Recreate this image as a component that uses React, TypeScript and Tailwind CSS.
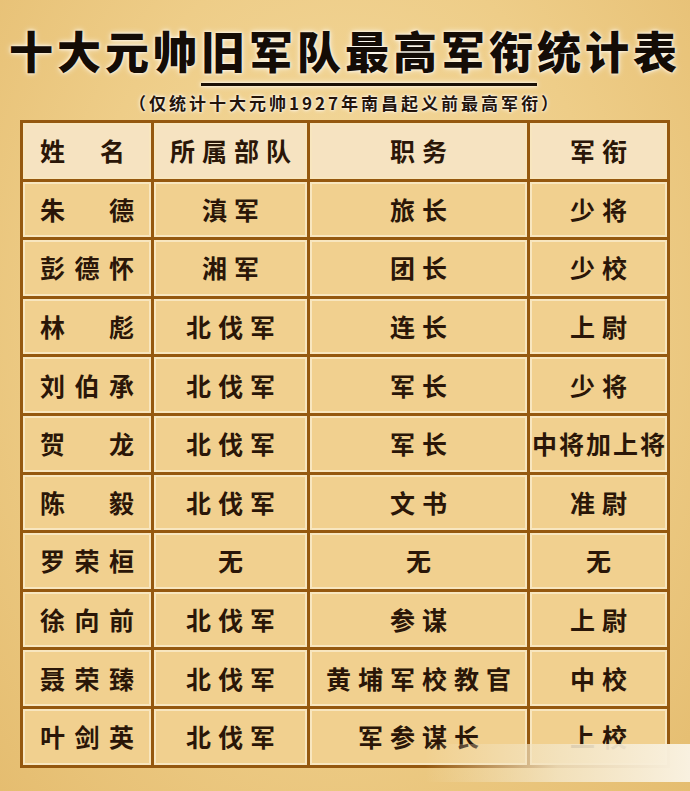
const rows: [string, string, string, string][] = [
  ['朱德', '滇军', '旅长', '少将'],
  ['彭德怀', '湘军', '团长', '少校'],
  ['林彪', '北伐军', '连长', '上尉'],
  ['刘伯承', '北伐军', '军长', '少将'],
  ['贺龙', '北伐军', '军长', '中将加上将'],
  ['陈毅', '北伐军', '文书', '准尉'],
  ['罗荣桓', '无', '无', '无'],
  ['徐向前', '北伐军', '参谋', '上尉'],
  ['聂荣臻', '北伐军', '黄埔军校教官', '中校'],
  ['叶剑英', '北伐军', '军参谋长', '上校'],
];

const cjk = "font-['Noto_Sans_CJK_SC',sans-serif]";

function NameCell({ name, header }: { name: string; header?: boolean }) {
  return (
    <div
      className={`flex items-center justify-between shadow-[inset_0_0_0_2px_#f8e6bf] ${
        header ? 'bg-[#f6e3c1] pl-[17px] pr-[26px]' : 'bg-[#f1d08f] px-[17px]'
      }`}
    >
      {name.split('').map((c, i) => (
        <span key={i}>{c}</span>
      ))}
    </div>
  );
}

function Cell({ text, header, tight }: { text: string; header?: boolean; tight?: boolean }) {
  return (
    <div
      className={`flex items-center justify-center shadow-[inset_0_0_0_2px_#f8e6bf] ${
        header ? 'bg-[#f6e3c1]' : 'bg-[#f1d08f]'
      } ${tight ? 'tracking-[2px] pl-[2px]' : 'tracking-[7px] pl-[7px]'}`}
    >
      {text}
    </div>
  );
}

export default function App() {
  return (
    <div
      className={`relative w-[690px] h-[791px] overflow-hidden bg-[radial-gradient(ellipse_at_50%_40%,#f4dca3_0%,#eecd88_55%,#e5bd70_100%)] text-[#2a1608] ${cjk}`}
    >
      <div className="pt-[26px] text-center text-[44px] leading-[48px] font-black tracking-[4px] text-[#140c06] [text-shadow:0_0_3px_#fff,0_0_6px_#fffc]">
        十大元帅
        <span className="underline decoration-[3px] underline-offset-[14px] decoration-[#1a1006]">旧军队最高军衔</span>
        统计表
      </div>

      <div className="mt-[19px] text-center text-[17px] leading-[20px] font-bold tracking-[3px] text-[#24140a] [text-shadow:0_0_2px_#fff,0_0_4px_#fff]">
        （仅统计十大元帅1927年南昌起义前最高军衔）
      </div>

      <div className="mt-[7px] px-[20px]">
        <div className="grid grid-cols-[128px_153px_217px_137px] grid-rows-[repeat(11,55.6px)] gap-[3px] bg-[#95580f] p-[3px] text-[25px] font-bold leading-none">
          <NameCell name="姓名" header />
          <Cell text="所属部队" header />
          <Cell text="职务" header />
          <Cell text="军衔" header />
          {rows.map(([name, unit, post, rank]) => (
            <div key={name} className="contents">
              <NameCell name={name} />
              <Cell text={unit} />
              <Cell text={post} />
              <Cell text={rank} tight={rank.length > 4} />
            </div>
          ))}
        </div>
      </div>

      <div className="absolute left-[425px] top-[744px] h-[38px] w-[265px] bg-gradient-to-r from-transparent via-[#f3e4c2e0] to-[#f9f1e0]" />
    </div>
  );
}
